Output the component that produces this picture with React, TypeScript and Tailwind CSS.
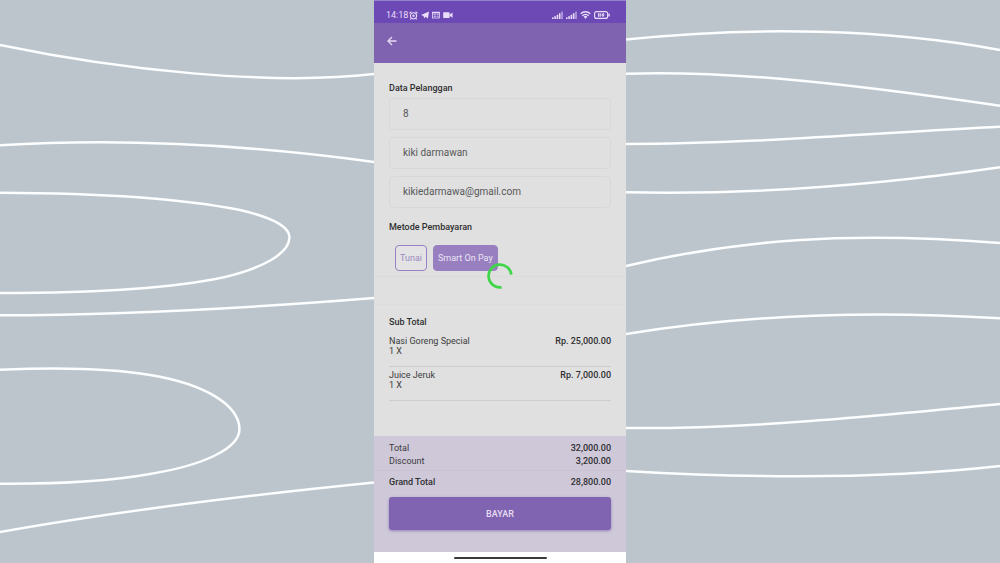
import { useState } from 'react'

interface OrderItem {
  name: string
  qty: number
  price: string
}

const customerFields = [
  { id: 'table', label: 'Nomor meja', type: 'text', value: '8' },
  { id: 'name', label: 'Nama', type: 'text', value: 'kiki darmawan' },
  { id: 'email', label: 'Email', type: 'email', value: 'kikiedarmawa@gmail.com' },
]

const paymentMethods = ['Tunai', 'Smart On Pay']

const items: OrderItem[] = [
  { name: 'Nasi Goreng Special', qty: 1, price: 'Rp. 25,000.00' },
  { name: 'Juice Jeruk', qty: 1, price: 'Rp. 7,000.00' },
]

const leftWaves = [
  'M0 45C120 70 270 86 374 74',
  'M0 145.3C120 138 250 145 374 162',
  'M0 192.7C90 193 180 198 240 210C270 217 289 226 289.5 237C289.5 254 262 268 225 277C165 290 80 293 0 293',
  'M0 315.3C130 315 250 308 374 298',
  'M0 369.7C60 367 110 368 150 375C205 384 239 405 239.5 429C239.5 448 205 465 150 474C105 482 50 484 0 483.7',
  'M0 532C90 516 200 500 374 482.5',
]

const rightWaves = [
  'M0 39.5C130 26 260 29 374 50',
  'M0 73.7C110 70 240 86 374 105.7',
  'M0 144C120 144 250 133 374 126.7',
  'M0 192.3C130 195 260 184 374 167.3',
  'M0 266C110 240 220 231 374 243',
  'M0 334C110 316 240 310 374 318.3',
  'M0 428C120 429 240 417 374 404',
  'M0 471C120 478 250 480 374 466',
]

function Waves({ paths }: { paths: string[] }) {
  return (
    <div className="relative min-w-0 flex-1 overflow-hidden">
      <svg
        className="absolute inset-0 h-full w-full"
        viewBox="0 0 374 563"
        preserveAspectRatio="none"
        fill="none"
        stroke="#fcfeff"
        strokeWidth="2.5"
        aria-hidden="true"
      >
        {paths.map(d => (
          <path key={d} d={d} />
        ))}
      </svg>
    </div>
  )
}

function SignalIcon() {
  return (
    <svg className="h-2 w-[11px]" viewBox="0 0 11 8" fill="currentColor" aria-hidden="true">
      <rect x="0" y="6.4" width="1.6" height="1.6" />
      <rect x="2.3" y="5.2" width="1.6" height="2.8" />
      <rect x="4.6" y="3.8" width="1.6" height="4.2" />
      <rect x="6.9" y="2.2" width="1.6" height="5.8" />
      <rect x="9.2" y="0.6" width="1.6" height="7.4" opacity="0.6" />
    </svg>
  )
}

function StatusBar() {
  return (
    <div className="flex h-[23px] items-center justify-between border-t border-[#9482cc] bg-[#6c49b5] pt-1.5 pr-4 pl-3 text-[#e9ddfa]">
      <div className="flex items-center gap-px">
        <span className="text-[9px] leading-3">14:18</span>
        <div className="flex items-center gap-[3px]">
          {/* alarm clock */}
          <svg className="size-[9px]" viewBox="0 0 10 10" fill="none" stroke="currentColor" aria-hidden="true">
            <circle cx="5" cy="5.4" r="3.4" strokeWidth="1.2" />
            <circle cx="5" cy="5.4" r="1.1" fill="currentColor" strokeWidth="0.5" />
            <path d="M.5 2.6 2.7.7M9.5 2.6 7.3.7M2.5 8l-.9 1.4M7.5 8l.9 1.4" strokeWidth="1.3" />
          </svg>
          {/* telegram */}
          <svg className="h-2 w-2" viewBox="0 0 8 8" fill="currentColor" aria-hidden="true">
            <path d="M8 .5 6.9 7.6 4.4 5.8 3.2 7.4 2.5 5 0 4Z" />
          </svg>
          {/* news card */}
          <svg className="h-2 w-2" viewBox="0 0 8 8" fill="none" stroke="currentColor" aria-hidden="true">
            <rect x=".5" y="1.2" width="7" height="5.8" strokeWidth="0.8" />
            <path d="M.5 1.7h7" strokeWidth="1.4" />
            <path d="M1.6 3.7h2.2M1.6 5.3h2.2M4.8 3.7h1.8M4.8 5.3h1.8" strokeWidth="0.9" />
          </svg>
          {/* video camera */}
          <svg className="h-2 w-[10px]" viewBox="0 0 10 8" fill="currentColor" aria-hidden="true">
            <rect x=".2" y="1.2" width="6.4" height="5.8" rx=".6" />
            <path d="M6.6 3.4 9.5 1.4v5.4L6.6 4.8Z" />
          </svg>
        </div>
      </div>
      <div className="flex items-center gap-[3px]">
        <SignalIcon />
        <SignalIcon />
        <svg className="h-2 w-[11px]" viewBox="0 0 11 8" fill="none" stroke="currentColor" strokeWidth="1.5" aria-hidden="true">
          <path d="M.7 2.8a6.9 6.9 0 0 1 9.6 0M2.3 4.7a4.6 4.6 0 0 1 6.4 0" />
          <path d="M3.6 5.6a2.8 2.8 0 0 1 3.8 0L5.5 8Z" fill="currentColor" stroke="none" />
        </svg>
        <svg className="h-2 w-4" viewBox="0 0 16 8" fill="none" stroke="currentColor" aria-hidden="true">
          <rect x=".6" y=".6" width="13" height="6.8" rx="2" strokeWidth="1.1" />
          <path d="M15 2.6v2.8" strokeWidth="1.4" />
          <path d="M4.6 2.3v3.4M6.2 2.3v3.4M9.6 2.2 8 4h1.8L8.6 5.8" strokeWidth="1.1" />
        </svg>
      </div>
    </div>
  )
}

function Spinner() {
  return (
    <div role="status" className="pointer-events-none absolute inset-0 flex items-center justify-center">
      <svg className="size-[26px]" viewBox="0 0 26 26" fill="none" stroke="#3fd64a" strokeWidth="2.7" aria-hidden="true">
        <path d="M24.3 11.6A11.4 11.4 0 1 0 14.6 24.3" />
      </svg>
    </div>
  )
}

export default function App() {
  const [method, setMethod] = useState('Smart On Pay')

  return (
    <div className="flex min-h-screen bg-[#bbc5cb] font-[Roboto,sans-serif]">
      <Waves paths={leftWaves} />

      <div className="flex w-[252px] shrink-0 flex-col">
        <div className="relative flex flex-1 flex-col bg-[#dfe0df] text-[#3c3c3e]">
          <StatusBar />

          <header className="flex h-10 items-center bg-[#7f63b0] px-3">
            <button aria-label="Kembali" className="-mt-1 text-[#e6daf5]">
              <svg className="size-3" viewBox="0 0 12 12" fill="none" stroke="currentColor" strokeWidth="1.3" aria-hidden="true">
                <path d="M10.5 6H2M6 2 2 6l4 4" />
              </svg>
            </button>
          </header>

          <main className="flex-1 text-[9px] leading-[10px]">
            <section className="px-[15px] pt-5">
              <h2 className="font-medium text-[#2f2f31]">Data Pelanggan</h2>
              <div className="mt-[5px] flex flex-col gap-[7px]">
                {customerFields.map(field => (
                  <input
                    key={field.id}
                    type={field.type}
                    aria-label={field.label}
                    defaultValue={field.value}
                    className="h-8 w-full rounded border border-[#d7d9d8] px-[13px] pb-0.5 text-[10px] text-[#58585a] outline-none"
                  />
                ))}
              </div>
            </section>

            <section className="mt-[14px] border-b border-[#dadbda] px-[15px] pb-[5px]">
              <h2 className="font-medium text-[#2f2f31]">Metode Pembayaran</h2>
              <div className="mt-[13px] flex gap-1.5 px-1.5">
                {paymentMethods.map(name => (
                  <button
                    key={name}
                    aria-pressed={method === name}
                    onClick={() => setMethod(name)}
                    className={`h-[26px] rounded-sm border border-[#9880c3] px-1 ${
                      method === name ? 'bg-[#9880c0] text-[#ebe4f4]' : 'bg-[#e3e2e5] text-[#9c8bbd]'
                    }`}
                  >
                    {name}
                  </button>
                ))}
              </div>
            </section>

            <section className="mt-[27px] border-t border-[#dcdddc] px-[15px] pt-3">
              <h2 className="font-medium text-[#2f2f31]">Sub Total</h2>
              <ul className="mt-[9px]">
                {items.map(item => (
                  <li key={item.name} className="mb-[3px] flex justify-between border-b border-[#cccecd] pb-[10px]">
                    <div>
                      <p>{item.name}</p>
                      <p>{item.qty} X</p>
                    </div>
                    <p className="font-medium text-[#2f2f31]">{item.price}</p>
                  </li>
                ))}
              </ul>
            </section>
          </main>

          <footer className="bg-[#cec8d8] pt-[7px] pb-[22px] text-[9px] leading-[10px]">
            <dl>
              <div className="flex justify-between px-[15px]">
                <dt>Total</dt>
                <dd className="font-medium text-[#2f2f31]">32,000.00</dd>
              </div>
              <div className="mt-[3px] flex justify-between px-[15px] pb-1">
                <dt>Discount</dt>
                <dd className="font-medium text-[#2f2f31]">3,200.00</dd>
              </div>
              <div className="flex justify-between border-t border-[#c9c3d3] px-[15px] pt-1.5 font-medium text-[#2f2f31]">
                <dt>Grand Total</dt>
                <dd>28,800.00</dd>
              </div>
            </dl>
            <div className="px-[15px] pt-[10px]">
              <button className="h-[33px] w-full rounded-[3px] bg-[#8064b1] font-medium text-[#e8dff3] shadow-sm shadow-[#9c8bbd]">
                BAYAR
              </button>
            </div>
          </footer>

          <Spinner />
        </div>

        {/* Gesture bar */}
        <div className="flex h-[11px] items-center justify-center bg-white">
          <div className="h-0.5 w-[93px] rounded-full bg-[#3a3a3a]" />
        </div>
      </div>

      <Waves paths={rightWaves} />
    </div>
  )
}
